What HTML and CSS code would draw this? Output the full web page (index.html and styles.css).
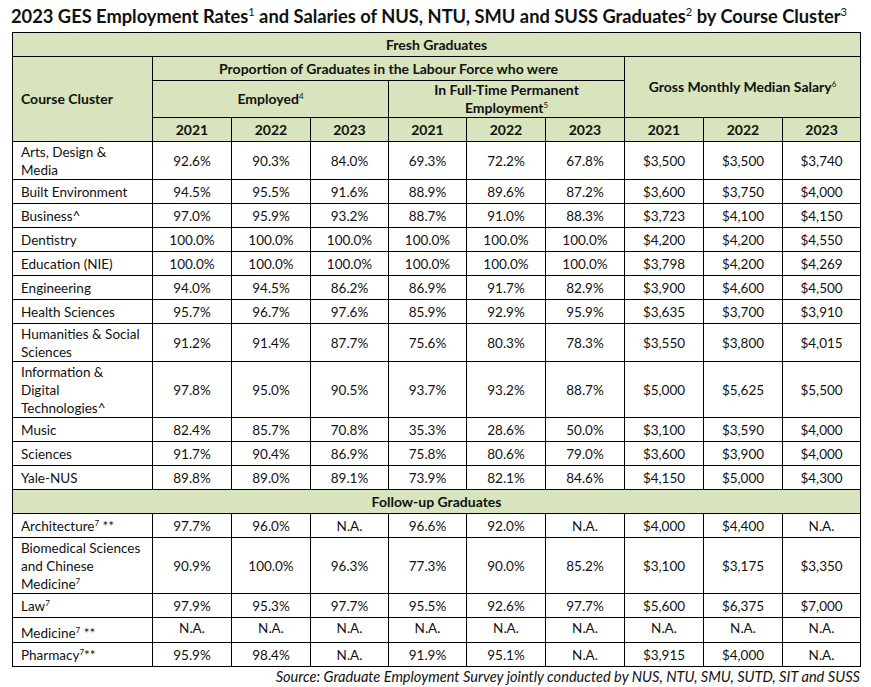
FILE: index.html
```html
<!DOCTYPE html>
<html lang="en">
<head>
<meta charset="utf-8">
<title>2023 GES Employment Rates</title>
<link rel="stylesheet" href="styles.css">
</head>
<body>
<div class="page">
  <h1 class="title">2023 GES Employment Rates<sup>1</sup> and Salaries of NUS, NTU, SMU and SUSS Graduates<sup>2</sup> by Course Cluster<sup>3</sup></h1>
  <table class="ges">
    <colgroup>
      <col class="c-label">
      <col class="c-num"><col class="c-num"><col class="c-num2">
      <col class="c-num2"><col class="c-num"><col class="c-num">
      <col class="c-num"><col class="c-num"><col class="c-num2">
    </colgroup>
    <thead>
      <tr class="h-row">
        <th colspan="10">Fresh Graduates</th>
      </tr>
      <tr class="h-row">
        <th rowspan="3" class="left">Course Cluster</th>
        <th colspan="6">Proportion of Graduates in the Labour Force who were</th>
        <th colspan="3" rowspan="2">Gross Monthly Median Salary<sup>6</sup></th>
      </tr>
      <tr class="h-tall">
        <th colspan="3">Employed<sup>4</sup></th>
        <th colspan="3">In Full-Time Permanent<br>Employment<sup>5</sup></th>
      </tr>
      <tr class="h-row">
        <th>2021</th><th>2022</th><th>2023</th>
        <th>2021</th><th>2022</th><th>2023</th>
        <th>2021</th><th>2022</th><th>2023</th>
      </tr>
    </thead>
    <tbody>
      <tr class="r2"><td class="label">Arts, Design &amp;<br>Media</td><td>92.6%</td><td>90.3%</td><td>84.0%</td><td>69.3%</td><td>72.2%</td><td>67.8%</td><td>$3,500</td><td>$3,500</td><td>$3,740</td></tr>
      <tr class="r1"><td class="label">Built Environment</td><td>94.5%</td><td>95.5%</td><td>91.6%</td><td>88.9%</td><td>89.6%</td><td>87.2%</td><td>$3,600</td><td>$3,750</td><td>$4,000</td></tr>
      <tr class="r1"><td class="label">Business^</td><td>97.0%</td><td>95.9%</td><td>93.2%</td><td>88.7%</td><td>91.0%</td><td>88.3%</td><td>$3,723</td><td>$4,100</td><td>$4,150</td></tr>
      <tr class="r1"><td class="label">Dentistry</td><td>100.0%</td><td>100.0%</td><td>100.0%</td><td>100.0%</td><td>100.0%</td><td>100.0%</td><td>$4,200</td><td>$4,200</td><td>$4,550</td></tr>
      <tr class="r1"><td class="label">Education (NIE)</td><td>100.0%</td><td>100.0%</td><td>100.0%</td><td>100.0%</td><td>100.0%</td><td>100.0%</td><td>$3,798</td><td>$4,200</td><td>$4,269</td></tr>
      <tr class="r1"><td class="label">Engineering</td><td>94.0%</td><td>94.5%</td><td>86.2%</td><td>86.9%</td><td>91.7%</td><td>82.9%</td><td>$3,900</td><td>$4,600</td><td>$4,500</td></tr>
      <tr class="r1"><td class="label">Health Sciences</td><td>95.7%</td><td>96.7%</td><td>97.6%</td><td>85.9%</td><td>92.9%</td><td>95.9%</td><td>$3,635</td><td>$3,700</td><td>$3,910</td></tr>
      <tr class="r2"><td class="label">Humanities &amp; Social<br>Sciences</td><td>91.2%</td><td>91.4%</td><td>87.7%</td><td>75.6%</td><td>80.3%</td><td>78.3%</td><td>$3,550</td><td>$3,800</td><td>$4,015</td></tr>
      <tr class="r3"><td class="label">Information &amp;<br>Digital<br>Technologies^</td><td>97.8%</td><td>95.0%</td><td>90.5%</td><td>93.7%</td><td>93.2%</td><td>88.7%</td><td>$5,000</td><td>$5,625</td><td>$5,500</td></tr>
      <tr class="r1"><td class="label">Music</td><td>82.4%</td><td>85.7%</td><td>70.8%</td><td>35.3%</td><td>28.6%</td><td>50.0%</td><td>$3,100</td><td>$3,590</td><td>$4,000</td></tr>
      <tr class="r1"><td class="label">Sciences</td><td>91.7%</td><td>90.4%</td><td>86.9%</td><td>75.8%</td><td>80.6%</td><td>79.0%</td><td>$3,600</td><td>$3,900</td><td>$4,000</td></tr>
      <tr class="r1"><td class="label">Yale-NUS</td><td>89.8%</td><td>89.0%</td><td>89.1%</td><td>73.9%</td><td>82.1%</td><td>84.6%</td><td>$4,150</td><td>$5,000</td><td>$4,300</td></tr>
      <tr class="h-row"><th colspan="10">Follow-up Graduates</th></tr>
      <tr class="r1"><td class="label">Architecture<sup>7</sup> **</td><td>97.7%</td><td>96.0%</td><td>N.A.</td><td>96.6%</td><td>92.0%</td><td>N.A.</td><td>$4,000</td><td>$4,400</td><td>N.A.</td></tr>
      <tr class="r3"><td class="label">Biomedical Sciences<br>and Chinese<br>Medicine<sup>7</sup></td><td>90.9%</td><td>100.0%</td><td>96.3%</td><td>77.3%</td><td>90.0%</td><td>85.2%</td><td>$3,100</td><td>$3,175</td><td>$3,350</td></tr>
      <tr class="r1"><td class="label">Law<sup>7</sup></td><td>97.9%</td><td>95.3%</td><td>97.7%</td><td>95.5%</td><td>92.6%</td><td>97.7%</td><td>$5,600</td><td>$6,375</td><td>$7,000</td></tr>
      <tr class="r1 top"><td class="label low">Medicine<sup>7</sup> **</td><td>N.A.</td><td>N.A.</td><td>N.A.</td><td>N.A.</td><td>N.A.</td><td>N.A.</td><td>N.A.</td><td>N.A.</td><td>N.A.</td></tr>
      <tr class="r1"><td class="label">Pharmacy<sup>7</sup>**</td><td>95.9%</td><td>98.4%</td><td>N.A.</td><td>91.9%</td><td>95.1%</td><td>N.A.</td><td>$3,915</td><td>$4,000</td><td>N.A.</td></tr>
    </tbody>
  </table>
  <p class="source">Source: Graduate Employment Survey jointly conducted by NUS, NTU, SMU, SUTD, SIT and SUSS</p>
</div>
</body>
</html>
```

FILE: styles.css
```css
html, body {
  margin: 0;
  padding: 0;
  background: #ffffff;
}

.page {
  padding: 5px 0 0 11px;
  font-family: Lato, "Open Sans", "Liberation Sans", sans-serif;
  color: #111111;
  width: 850px;
}

.title {
  margin: 0 0 5px 0;
  font-size: 18.3px;
  font-weight: 700;
  line-height: 22px;
  white-space: nowrap;
  letter-spacing: 0;
}

.title sup {
  font-size: 11px;
  font-weight: 400;
  vertical-align: 7px;
  line-height: 0;
}

.ges {
  border-collapse: collapse;
  table-layout: fixed;
  width: 849px;
  margin-left: 1px;
  font-size: 13.5px;
}

.c-label { width: 140px; }
.c-num { width: 79px; }
.c-num2 { width: 78px; }

.ges th,
.ges td {
  border: 1px solid #000000;
  padding: 0;
  text-align: center;
  vertical-align: middle;
  line-height: 18px;
}

.ges th {
  background: #d7e4bd;
  font-weight: 700;
  font-size: 14px;
}

.ges th.left {
  text-align: left;
  padding-left: 8px;
}

.ges td.label {
  text-align: left;
  padding-left: 8px;
}

.ges sup {
  font-size: 8px;
  line-height: 0;
  vertical-align: 5px;
  font-weight: 400;
}

.h-row th { height: 23px; }
.h-tall th { height: 36px; }
.r1 td { height: 23px; }
.r2 td { height: 37px; }
.r3 td { height: 55px; }

.top td { vertical-align: top; padding-top: 1px; }
.top td.low { vertical-align: bottom; padding-top: 0; }

.source {
  margin: 1px 0 0 0;
  width: 849px;
  text-align: right;
  font-style: italic;
  font-size: 14.6px;
  line-height: 18px;
}
```
